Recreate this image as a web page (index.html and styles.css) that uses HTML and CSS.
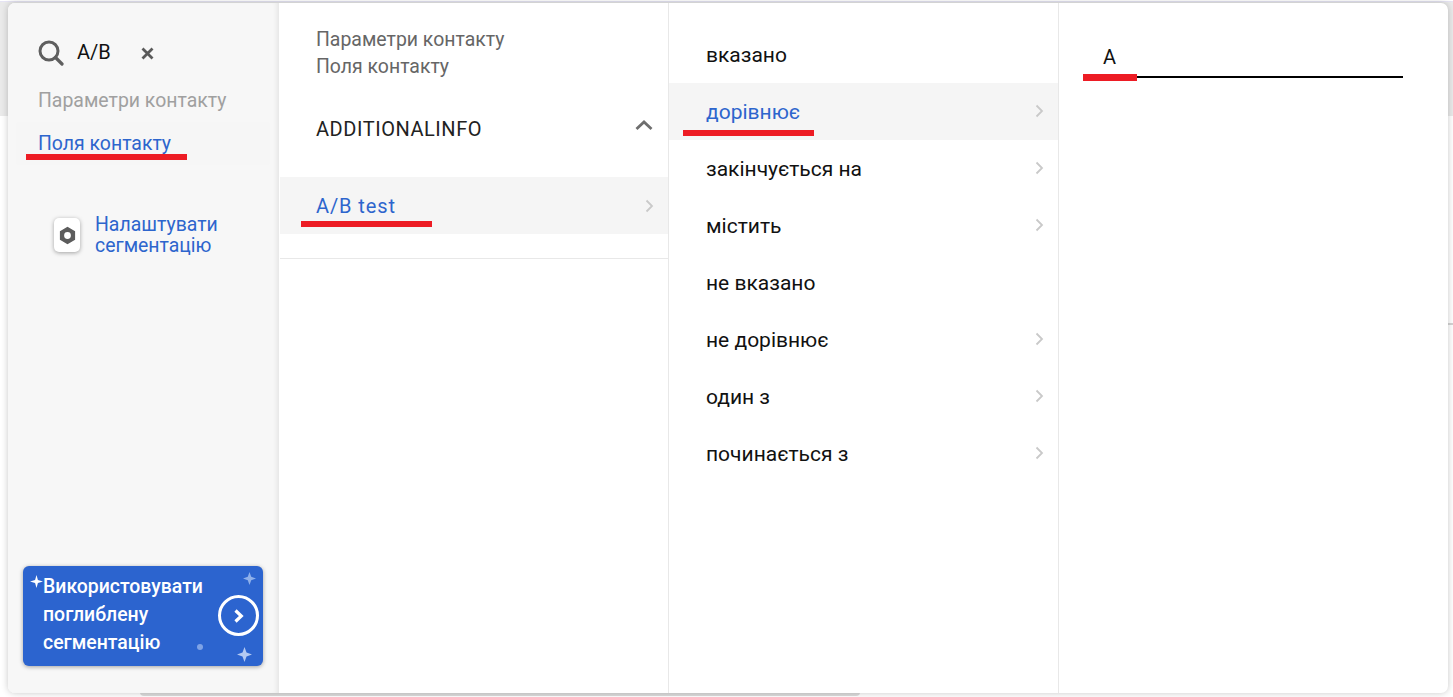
FILE: index.html
```html
<!DOCTYPE html>
<html lang="uk">
<head>
<meta charset="utf-8">
<title>Сегментація</title>
<link rel="stylesheet" href="styles.css">
</head>
<body>
<div class="backdrop-band"></div>
<div class="backdrop-top"></div>
<div class="backdrop-tick"></div>
<div class="backdrop-bottom"></div>
<main class="panel">
  <aside class="col-nav">
    <div class="search">
      <svg class="search-icon" viewBox="0 0 26 26" width="26" height="26"><circle cx="11" cy="11" r="9" fill="none" stroke="#5f5f5f" stroke-width="3"/><path d="M17.500 17.500l6.500 6.500" stroke="#5f5f5f" stroke-width="3.200" stroke-linecap="round"/></svg>
      <span class="search-text">A/B</span>
      <svg class="search-clear" viewBox="0 0 13 13" width="13" height="13"><path d="M1.500 1.500l10 10M11.500 1.500l-10 10" stroke="#5a5a5a" stroke-width="2.800"/></svg>
    </div>
    <div class="nav-item">Параметри контакту</div>
    <div class="nav-item nav-active">Поля контакту<i class="mark mark-nav"></i></div>
    <div class="setup">
      <span class="setup-icon"><svg viewBox="0 0 18 18" width="19" height="19"><path fill="#5c5c5c" fill-rule="evenodd" d="M9 .8l7.200 4.200v8L9 17.200 1.800 13V5zM9 5.800a3.200 3.200 0 1 0 0 6.400 3.200 3.200 0 0 0 0-6.400z"/></svg></span>
      <span class="setup-text">Налаштувати сегментацію</span>
    </div>
    <div class="promo">
      <svg class="spark spark-a" viewBox="0 0 12 12" width="13" height="13"><path fill="#fff" d="M6 0l1.300 4.700L12 6 7.300 7.300 6 12 4.700 7.300 0 6l4.700-1.300z"/></svg>
      <svg class="spark spark-b" viewBox="0 0 12 12" width="13" height="13"><path fill="#8fb0ea" d="M6 0l1.600 4.400L12 6 7.600 7.600 6 12 4.400 7.600 0 6l4.400-1.600z"/></svg>
      <svg class="spark spark-c" viewBox="0 0 12 12" width="15" height="15"><path fill="#b5caf2" d="M6 0l1.600 4.400L12 6 7.600 7.600 6 12 4.400 7.600 0 6l4.400-1.600z"/></svg>
      <i class="dot"></i>
      <span class="promo-text">Використовувати поглиблену сегментацію</span>
      <span class="promo-go"><svg viewBox="0 0 12 16" width="12" height="16"><path d="M2.500 2.500L8.300 8l-5.800 5.500" fill="none" stroke="#fff" stroke-width="3.200"/></svg></span>
    </div>
  </aside>
  <section class="col-fields">
    <div class="crumbs">
      <div>Параметри контакту</div>
      <div>Поля контакту</div>
    </div>
    <div class="group">
      <span>ADDITIONALINFO</span>
      <svg viewBox="0 0 20 12" width="20" height="12"><path d="M2.500 10L10 3l7.500 7" fill="none" stroke="#6e6e6e" stroke-width="2.800"/></svg>
    </div>
    <div class="field">
      <span>A/B test<i class="mark mark-field"></i></span>
      <svg class="chev" viewBox="0 0 9 14" width="9" height="14"><path d="M1.500 1.500L7 7l-5.500 5.500" fill="none" stroke="#c9c9c9" stroke-width="1.800"/></svg>
    </div>
    <div class="rule"></div>
  </section>
  <section class="col-ops">
    <div class="op"><span>вказано</span></div>
    <div class="op op-active"><span>дорівнює<i class="mark mark-op"></i></span><svg class="chev" viewBox="0 0 9 14" width="9" height="14"><path d="M1.500 1.500L7 7l-5.500 5.500" fill="none" stroke="#c9c9c9" stroke-width="1.800"/></svg></div>
    <div class="op"><span>закінчується на</span><svg class="chev" viewBox="0 0 9 14" width="9" height="14"><path d="M1.500 1.500L7 7l-5.500 5.500" fill="none" stroke="#c9c9c9" stroke-width="1.800"/></svg></div>
    <div class="op"><span>містить</span><svg class="chev" viewBox="0 0 9 14" width="9" height="14"><path d="M1.500 1.500L7 7l-5.500 5.500" fill="none" stroke="#c9c9c9" stroke-width="1.800"/></svg></div>
    <div class="op"><span>не вказано</span></div>
    <div class="op"><span>не дорівнює</span><svg class="chev" viewBox="0 0 9 14" width="9" height="14"><path d="M1.500 1.500L7 7l-5.500 5.500" fill="none" stroke="#c9c9c9" stroke-width="1.800"/></svg></div>
    <div class="op"><span>один з</span><svg class="chev" viewBox="0 0 9 14" width="9" height="14"><path d="M1.500 1.500L7 7l-5.500 5.500" fill="none" stroke="#c9c9c9" stroke-width="1.800"/></svg></div>
    <div class="op"><span>починається з</span><svg class="chev" viewBox="0 0 9 14" width="9" height="14"><path d="M1.500 1.500L7 7l-5.500 5.500" fill="none" stroke="#c9c9c9" stroke-width="1.800"/></svg></div>
  </section>
  <section class="col-value">
    <div class="value-input">A<i class="mark mark-value"></i></div>
  </section>
</main>
</body>
</html>
```
FILE: styles.css
```css
* { box-sizing: border-box; }
html, body { height: 100%; }
body {
  margin: 0;
  height: 697px;
  overflow: hidden;
  position: relative;
  padding: 3px 5px 4px 8px;
  background: #fff;
  font-family: Roboto, "Noto Sans", sans-serif;
}
.backdrop-band {
  position: absolute; left: 0; right: 0; top: 2px; height: 114px; background: #eaeaea;
}
.backdrop-top {
  position: absolute; left: 0; right: 0; top: 1px; height: 1px; background: #e6e4f4;
}
.backdrop-tick {
  position: absolute; right: 0; top: 323px; width: 5px; height: 2px; background: #d4d4d4;
}
.backdrop-bottom {
  position: absolute; left: 140px; top: 690px; width: 720px; height: 6px;
  background: #ddd; border-radius: 0 0 4px 4px;
}
.panel {
  position: relative;
  display: flex;
  height: 690px;
  background: #fff;
  border-radius: 7px;
  box-shadow: 0 0 7px rgba(0,0,0,.22);
  overflow: hidden;
}
.col-nav {
  width: 271px;
  flex: none;
  background: #f7f7f7;
  box-shadow: inset -5px 0 5px -3px rgba(0,0,0,.08);
  display: flex;
  flex-direction: column;
  padding: 37px 15px 27px;
}
.search {
  display: flex;
  align-items: center;
  height: 26px;
  padding-left: 15px;
}
.search-icon { flex: none; }
.search-text { margin-left: 13px; font-size: 20px; line-height: 24px; margin-top: -2px; color: #111; width: 64px; }
.search-clear { flex: none; margin-top: 1px; }
.nav-item {
  font-size: 19.440px;
  line-height: 43px;
  height: 43px;
  padding-left: 15px;
  color: #a0a0a0;
  position: relative;
}
.search + .nav-item { margin-top: 14px; line-height: 42px; height: 42px; }
.nav-active {
  color: #2d65cd;
  background: #f6f6f6;
  margin: 0 -6px 0 -7px;
  padding-left: 22px;
  border-radius: 4px;
}
.mark {
  position: absolute;
  height: 6px;
  background: #ed1c24;
  display: block;
}
.mark-nav { left: 10px; width: 161px; top: 32px; }
.setup {
  display: flex;
  align-items: center;
  margin: 49px 0 0 31px;
}
.setup-icon {
  width: 26px; height: 34px;
  flex: none;
  background: #fff;
  border-radius: 5px;
  box-shadow: 0 1px 4px rgba(0,0,0,.35);
  display: flex; align-items: center; justify-content: center;
}
.setup-text {
  margin-left: 15px;
  width: 150px;
  font-size: 19.440px;
  line-height: 21px;
  color: #2d65cd;
}
.promo {
  margin-top: auto;
  position: relative;
  width: 240px;
  height: 100px;
  background: #2c64cf;
  border-radius: 6px;
  box-shadow: 0 1px 4px rgba(0,0,0,.35);
  display: flex;
  align-items: center;
  padding-left: 20px;
  color: #fff;
}
.promo-text {
  width: 170px;
  font-size: 19.440px;
  font-weight: 500;
  line-height: 28px;
  margin-top: -2px;
}
.promo-go {
  width: 41px; height: 41px;
  border: 3px solid #fff;
  border-radius: 50%;
  display: flex; align-items: center; justify-content: center;
  position: absolute; left: 195px; top: 29px;
}
.spark { position: absolute; }
.spark-a { left: 7px; top: 9px; }
.spark-b { left: 220px; top: 6px; }
.spark-c { left: 214px; top: 81px; }
.dot { position: absolute; left: 174px; top: 78px; width: 6px; height: 6px; border-radius: 50%; background: #7fa3e6; }
.col-fields {
  width: 389px;
  flex: none;
  margin-left: 1px;
  border-right: 1px solid #e8e8e8;
  padding-top: 23px;
}
.crumbs {
  padding-left: 36px;
  font-size: 19.440px;
  line-height: 27px;
  color: #666;
}
.group {
  display: flex;
  align-items: center;
  justify-content: space-between;
  height: 96px;
  padding: 2px 14px 0 36px;
  font-size: 20px;
  color: #222;
  letter-spacing: .55px;
}
.group svg { margin-top: -8px; }
.field {
  display: flex;
  align-items: center;
  justify-content: space-between;
  height: 57px;
  margin-top: 1px;
  padding: 0 14px 0 36px;
  background: #f5f5f5;
  color: #2d65cd;
  font-size: 20px;
  letter-spacing: .9px;
}
.field span, .op span { position: relative; }
.mark-field { left: -15px; width: 131px; top: 27px; }
.rule { margin-top: 24px; height: 1px; background: #e8e8e8; }
.col-ops {
  width: 390px;
  flex: none;
  border-right: 1px solid #e8e8e8;
  padding-top: 23px;
}
.op {
  display: flex;
  align-items: center;
  justify-content: space-between;
  height: 57px;
  padding: 0 14px 0 37px;
  font-size: 21px;
  color: #111;
}
.op .chev { margin-top: -1px; }
.op-active { background: #f5f5f5; color: #2d65cd; }
.mark-op { left: -23px; width: 131px; top: 30px; }
.col-value {
  flex: 1;
  padding: 41px 45px 0 24px;
}
.value-input {
  position: relative;
  height: 34px;
  padding: 1px 0 0 20px;
  border-bottom: 2px solid #000;
  font-size: 20px;
  line-height: 24px;
  color: #111;
}
.mark-value { left: 0; width: 54px; top: 30px; height: 7px; }
```
